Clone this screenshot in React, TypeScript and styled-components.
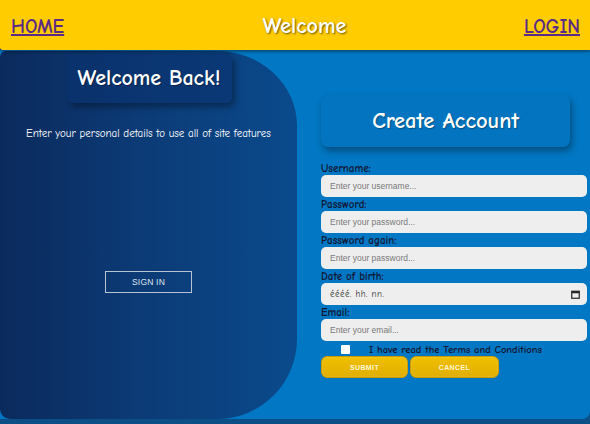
import React from "react";
import styled, { createGlobalStyle } from "styled-components";

const comic = `"Comic Sans MS", "Comic Neue", "DejaVu Sans", sans-serif`;

const GlobalStyle = createGlobalStyle`
  html, body { margin: 0; padding: 0; }
  body {
    background: #0b4f86;
    font-family: ${comic};
    width: 590px;
    height: 424px;
    overflow: hidden;
  }
`;

const Page = styled.div`
  display: flex;
  flex-direction: column;
  width: 590px;
`;

const Header = styled.header`
  height: 50px;
  background: #ffcc00;
  display: grid;
  grid-template-columns: 1fr auto 1fr;
  align-items: center;
  padding: 0 10px 0 11px;
  box-shadow: 0 2px 3px rgba(0, 0, 0, 0.35);
  position: relative;
  z-index: 2;
  border-bottom-left-radius: 3px;
`;

const NavLink = styled.a<{ $right?: boolean }>`
  font-family: ${comic};
  font-weight: bold;
  font-size: 19.5px;
  color: #5b2a86;
  text-decoration: underline;
  text-decoration-thickness: 2px;
  justify-self: ${(p) => (p.$right ? "end" : "start")};
  margin-top: 2px;
`;

const HeaderTitle = styled.h1`
  margin: 0;
  font-family: ${comic};
  font-weight: bold;
  font-size: 22px;
  color: #ffffff;
  text-shadow: 1px 1px 2px rgba(0, 0, 0, 0.6);
  margin-top: 2px;
  margin-left: 18px;
`;

const Main = styled.main`
  display: grid;
  grid-template-columns: 297px 1fr;
  height: 369px;
  background: #0277c3;
  border-bottom-right-radius: 8px;
`;

const LeftPanel = styled.section`
  background: linear-gradient(to right, #0b2a5c 0%, #0c3a75 45%, #0a4a8c 100%);
  border-radius: 6px 80px 80px 10px / 6px 75px 80px 10px;
  display: flex;
  flex-direction: column;
  align-items: center;
  padding-top: 2px;
  margin-top: 1px;
`;

const WelcomeBox = styled.div`
  width: 165px;
  height: 50px;
  display: flex;
  align-items: center;
  justify-content: center;
  border-radius: 6px;
  box-shadow: 3px 4px 6px rgba(0, 0, 0, 0.35);
  background: rgba(10, 50, 110, 0.6);
  margin-left: 1px;
`;

const BoxTitle = styled.h2<{ $size: number }>`
  margin: 0;
  font-family: ${comic};
  font-weight: bold;
  font-size: ${(p) => p.$size}px;
  color: #ffffff;
  text-shadow: 1px 1px 1px rgba(0, 0, 0, 0.3);
`;

const Subtitle = styled.p`
  margin: 24px 0 0;
  font-family: ${comic};
  font-size: 11px;
  color: #ffffff;
`;

const OutlineButton = styled.button`
  margin-top: 131px;
  width: 87px;
  height: 22px;
  background: transparent;
  border: 1px solid #b8c4d4;
  color: #dfe6ef;
  font-family: "Liberation Sans", Arial, sans-serif;
  font-size: 8.5px;
  letter-spacing: 0.2px;
  padding: 0;
`;

const RightPanel = styled.section`
  display: flex;
  flex-direction: column;
  padding: 45px 3px 0 24px;
`;

const CreateBox = styled.div`
  width: 249px;
  height: 52px;
  display: flex;
  align-items: center;
  justify-content: center;
  border-radius: 7px;
  background: #0274c0;
  box-shadow: 2px 4px 7px rgba(0, 0, 0, 0.35);
  margin-bottom: 15px;
`;

const Form = styled.form`
  display: flex;
  flex-direction: column;
`;

const Label = styled.label`
  font-family: ${comic};
  font-size: 11px;
  font-weight: bold;
  line-height: 13px;
  color: #111836;
`;

const fieldCss = `
  height: 22px;
  box-sizing: border-box;
  border: none;
  border-radius: 5px;
  background: #eeeeee;
  margin-bottom: 1px;
  padding: 0 9px;
  font-family: "Liberation Sans", Arial, sans-serif;
  font-size: 8.5px;
  color: #555;
`;

const Input = styled.input`
  ${fieldCss}
  outline: none;
  &::placeholder { color: #7a7a7a; }
`;

const DateField = styled.div`
  ${fieldCss}
  display: flex;
  align-items: center;
  justify-content: space-between;
  color: #333;
  font-family: ${comic};
  font-size: 9px;
  letter-spacing: 0.5px;
  padding-right: 7px;
`;

const CheckRow = styled.div`
  display: flex;
  align-items: center;
  height: 12px;
  padding-left: 20px;
  gap: 19px;
  margin-top: 1px;
`;

const CheckBox = styled.span`
  width: 9px;
  height: 9px;
  background: #ffffff;
  border-radius: 1px;
`;

const CheckText = styled.span`
  font-family: ${comic};
  font-size: 10.6px;
  font-weight: bold;
  color: #111836;
`;

const ButtonRow = styled.div`
  display: flex;
  gap: 2px;
  margin-top: 1px;
`;

const YellowButton = styled.button<{ $w: number }>`
  width: ${(p) => p.$w}px;
  height: 22px;
  border-radius: 6px;
  border: 1px solid #c99a00;
  background: linear-gradient(to bottom, #f0c000, #e0ae00);
  color: #fff7d8;
  font-family: "Liberation Sans", Arial, sans-serif;
  font-weight: bold;
  font-size: 7px;
  letter-spacing: 0.4px;
  padding: 0;
  box-shadow: inset 0 0 2px rgba(255, 255, 255, 0.3);
`;

const CalendarIcon = () => (
  <svg width="9" height="9" viewBox="0 0 9 9">
    <rect x="0.75" y="1.25" width="7.5" height="7" fill="none" stroke="#222" strokeWidth="1.2" />
    <rect x="0.75" y="1.25" width="7.5" height="2" fill="#222" />
  </svg>
);

export default function App() {
  return (
    <>
      <GlobalStyle />
      <Page>
        <Header>
          <NavLink href="#">HOME</NavLink>
          <HeaderTitle>Welcome</HeaderTitle>
          <NavLink href="#" $right>
            LOGIN
          </NavLink>
        </Header>
        <Main>
          <LeftPanel>
            <WelcomeBox>
              <BoxTitle $size={22}>Welcome Back!</BoxTitle>
            </WelcomeBox>
            <Subtitle>Enter your personal details to use all of site features</Subtitle>
            <OutlineButton>SIGN IN</OutlineButton>
          </LeftPanel>
          <RightPanel>
            <CreateBox>
              <BoxTitle $size={22.5}>Create Account</BoxTitle>
            </CreateBox>
            <Form>
              <Label>Username:</Label>
              <Input placeholder="Enter your username..." />
              <Label>Password:</Label>
              <Input type="password" placeholder="Enter your password..." />
              <Label>Password again:</Label>
              <Input type="password" placeholder="Enter your password..." />
              <Label>Date of birth:</Label>
              <DateField>
                <span>éééé. hh. nn.</span>
                <CalendarIcon />
              </DateField>
              <Label>Email:</Label>
              <Input placeholder="Enter your email..." />
              <CheckRow>
                <CheckBox />
                <CheckText>I have read the Terms and Conditions</CheckText>
              </CheckRow>
              <ButtonRow>
                <YellowButton type="button" $w={87}>SUBMIT</YellowButton>
                <YellowButton type="button" $w={89}>CANCEL</YellowButton>
              </ButtonRow>
            </Form>
          </RightPanel>
        </Main>
      </Page>
    </>
  );
}
